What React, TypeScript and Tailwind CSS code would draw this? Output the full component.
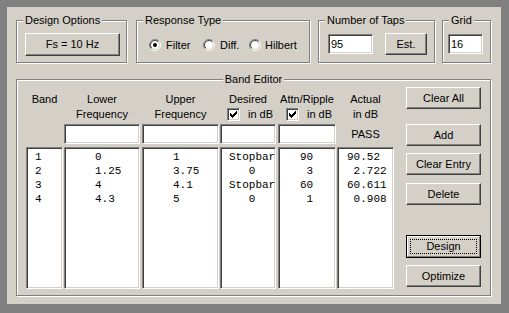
import React from 'react';

const face = "font-['Liberation_Sans',Arial,sans-serif]";
const mono = "font-['Liberation_Mono','Courier_New',monospace]";

const sunken =
	'border border-t-[#808080] border-l-[#808080] border-r-white border-b-white shadow-[inset_1px_1px_0_#404040,inset_-1px_-1px_0_#d4d0c8] bg-white';

function Group({ title, center, className, children }: { title: string; center?: boolean; className?: string; children?: React.ReactNode }) {
	return (
		<div className={`relative border border-[#808080] shadow-[inset_1px_1px_0_#fff,1px_1px_0_#fff] ${className ?? ''}`}>
			<span
				className={`absolute -top-[7px] ${center ? 'left-1/2 -translate-x-1/2' : 'left-[6px]'} bg-[#d4d0c8] px-[2px] leading-[13px] whitespace-nowrap`}
			>
				{title}
			</span>
			{children}
		</div>
	);
}

function Btn({ label, className, isDefault }: { label: string; className?: string; isDefault?: boolean }) {
	if (isDefault) {
		return (
			<div className={`border border-black flex ${className ?? ''}`}>
				<div className="flex-1 flex p-[2px] border border-t-white border-l-white border-r-[#808080] border-b-[#808080]">
					<span className="flex-1 flex items-center justify-center border border-dotted border-black leading-[13px]">{label}</span>
				</div>
			</div>
		);
	}
	return (
		<div
			className={`flex items-center justify-center border border-t-white border-l-white border-r-[#404040] border-b-[#404040] shadow-[inset_-1px_-1px_0_#808080] leading-[13px] ${className ?? ''}`}
		>
			{label}
		</div>
	);
}

function Radio({ id, checked }: { id: string; checked?: boolean }) {
	return (
		<svg width="12" height="12" viewBox="0 0 12 12" className="shrink-0">
			<defs>
				<clipPath id={`tl-${id}`}>
					<polygon points="0,0 12,0 0,12" />
				</clipPath>
				<clipPath id={`br-${id}`}>
					<polygon points="12,0 12,12 0,12" />
				</clipPath>
			</defs>
			<circle cx="6" cy="6" r="4.5" fill="#fff" />
			<g clipPath={`url(#tl-${id})`} fill="none">
				<circle cx="6" cy="6" r="5.5" stroke="#808080" />
				<circle cx="6" cy="6" r="4.5" stroke="#404040" />
			</g>
			<g clipPath={`url(#br-${id})`} fill="none">
				<circle cx="6" cy="6" r="5.5" stroke="#fff" />
				<circle cx="6" cy="6" r="4.5" stroke="#d4d0c8" />
			</g>
			{checked && <circle cx="6" cy="6" r="2" fill="#000" />}
		</svg>
	);
}

function Check() {
	return (
		<div className={`w-[13px] h-[13px] shrink-0 flex items-center justify-center ${sunken}`}>
			<svg width="7" height="7" viewBox="0 0 7 7" shapeRendering="crispEdges">
				<path
					d="M0 2h1v3h-1z M1 3h1v3h-1z M2 4h1v3h-1z M3 3h1v3h-1z M4 2h1v3h-1z M5 1h1v3h-1z M6 0h1v3h-1z"
					fill="#000"
				/>
			</svg>
		</div>
	);
}

type Col = {
	width: string;
	gap: string;
	head1: string;
	head2?: React.ReactNode;
	entry: 'none' | 'input' | 'pass';
	pad: string;
	rows: string[];
};

const cols: Col[] = [
	{ width: 'w-[37px]', gap: '', head1: 'Band', entry: 'none', pad: 'pl-[8px]', rows: ['1', '2', '3', '4'] },
	{ width: 'w-[76px]', gap: 'ml-[1px]', head1: 'Lower', head2: 'Frequency', entry: 'input', pad: 'pl-[30px]', rows: ['0', '1.25', '4', '4.3'] },
	{ width: 'w-[77px]', gap: 'ml-[2px]', head1: 'Upper', head2: 'Frequency', entry: 'input', pad: 'pl-[30px]', rows: ['1', '3.75', '4.1', '5'] },
	{
		width: 'w-[56px]',
		gap: 'ml-[1px]',
		head1: 'Desired',
		head2: (
			<span className="flex items-center justify-center gap-[8px] pl-[4px]">
				<Check />
				<span>in dB</span>
			</span>
		),
		entry: 'input',
		pad: 'pl-[8px]',
		rows: ['Stopbar', '   0', 'Stopbar', '   0'],
	},
	{
		width: 'w-[58px]',
		gap: 'ml-[2px]',
		head1: 'Attn/Ripple',
		head2: (
			<span className="flex items-center justify-center gap-[8px] pl-[4px]">
				<Check />
				<span>in dB</span>
			</span>
		),
		entry: 'input',
		pad: 'pl-[21px]',
		rows: ['90', ' 3', '60', ' 1'],
	},
	{ width: 'w-[57px]', gap: 'ml-[1px]', head1: 'Actual', head2: 'in dB', entry: 'pass', pad: 'pl-[9px]', rows: ['90.52', ' 2.722', '60.611', ' 0.908'] },
];

export default function App() {
	return (
		<div className={`w-[509px] h-[313px] bg-[#808080] pt-[7px] pl-[7px] text-[11px] text-black ${face}`}>
			<div className="w-[494px] h-[297px] bg-[#d4d0c8] pl-[9px] pt-[13px]">
				{/* top row of option groups */}
				<div className="flex items-start">
					<Group title="Design Options" className="w-[111px] h-[43px] pl-[8px] pt-[12px]">
						<Btn label="Fs = 10 Hz" className="w-[95px] h-[23px]" />
					</Group>
					<Group title="Response Type" className="ml-[9px] w-[174px] h-[43px] pl-[12px] pt-[18px]">
						<div className="flex items-center h-[12px]">
							<div className="w-[54px] flex items-center gap-[5px]">
								<Radio id="filter" checked />
								<span className="leading-[13px]">Filter</span>
							</div>
							<div className="w-[46px] flex items-center gap-[5px]">
								<Radio id="diff" />
								<span className="leading-[13px]">Diff.</span>
							</div>
							<div className="flex items-center gap-[4px]">
								<Radio id="hilbert" />
								<span className="leading-[13px]">Hilbert</span>
							</div>
						</div>
					</Group>
					<Group title="Number of Taps" className="ml-[8px] w-[117px] h-[43px] pl-[9px] pt-[12px]">
						<div className="flex items-start">
							<div className={`mt-[1px] w-[45px] h-[20px] flex items-center pl-[2px] ${sunken}`}>95</div>
							<Btn label="Est." className="ml-[12px] w-[42px] h-[22px]" />
						</div>
					</Group>
					<Group title="Grid" className="ml-[7px] w-[49px] h-[43px] pl-[5px] pt-[13px]">
						<div className={`w-[35px] h-[20px] flex items-center pl-[2px] ${sunken}`}>16</div>
					</Group>
				</div>

				{/* band editor */}
				<Group title="Band Editor" center className="mt-[16px] w-[475px] h-[217px] flex pl-[9px]">
					<div className="flex pt-[12px]">
						{cols.map((c) => (
							<div key={c.head1} className={`flex flex-col ${c.width} ${c.gap}`}>
								<div className="h-[30px] text-center leading-[15px] whitespace-nowrap">
									<div>{c.head1}</div>
									<div className="h-[15px] flex items-center justify-center">{c.head2}</div>
								</div>
								<div className="mt-[2px] h-[20px]">
									{c.entry === 'input' && <div className={`h-[20px] ${sunken}`} />}
									{c.entry === 'pass' && <div className="h-[20px] flex items-center justify-center">PASS</div>}
								</div>
								<div className={`mt-[3px] h-[142px] overflow-hidden pt-[2px] ${c.pad} ${mono} leading-[14px] whitespace-pre ${sunken}`}>
									{c.rows.map((r, i) => (
										<div key={i}>{r}</div>
									))}
								</div>
							</div>
						))}
					</div>
					<div className="ml-[12px] pt-[7px] flex flex-col">
						<Btn label="Clear All" className="w-[75px] h-[22px]" />
						<Btn label="Add" className="mt-[15px] w-[75px] h-[22px]" />
						<Btn label="Clear Entry" className="mt-[7px] w-[75px] h-[22px]" />
						<Btn label="Delete" className="mt-[8px] w-[75px] h-[22px]" />
						<Btn label="Design" isDefault className="mt-[30px] w-[75px] h-[23px]" />
						<Btn label="Optimize" className="mt-[7px] w-[75px] h-[22px]" />
					</div>
				</Group>
			</div>
		</div>
	);
}
